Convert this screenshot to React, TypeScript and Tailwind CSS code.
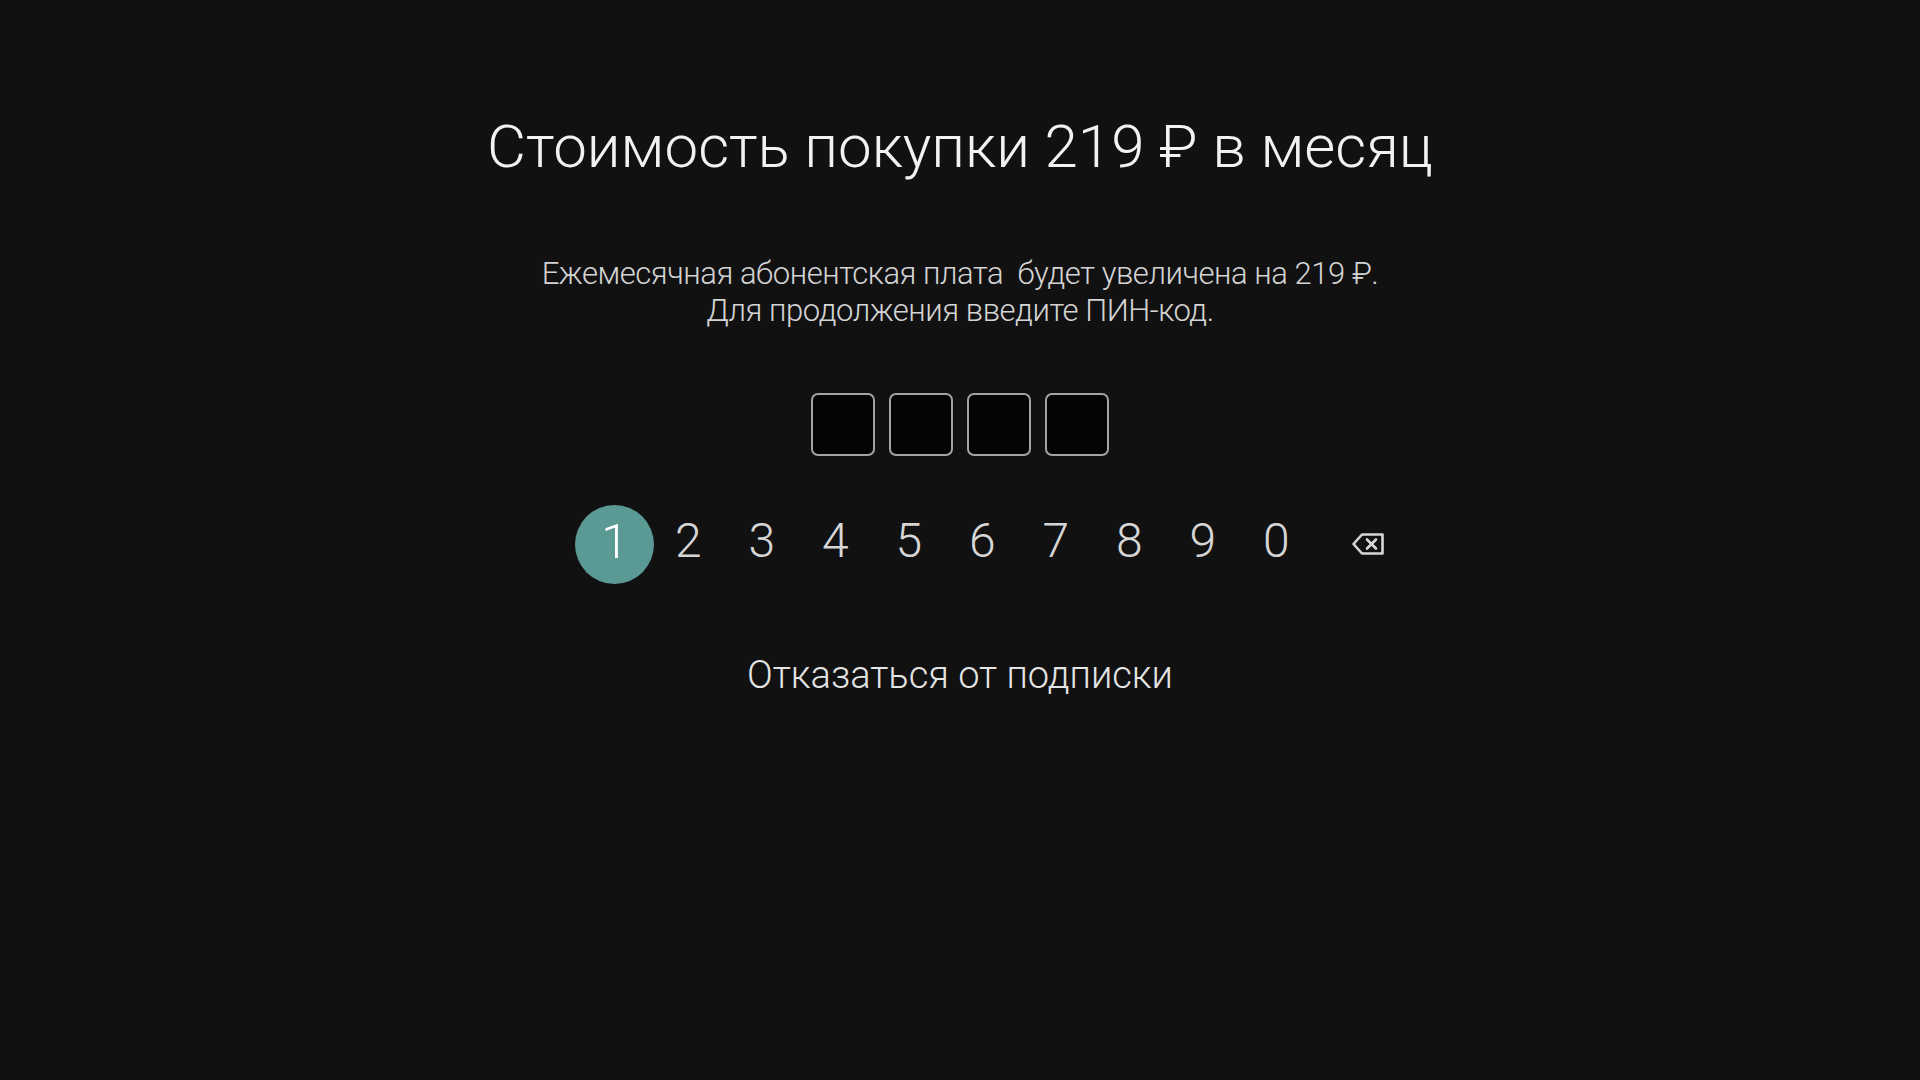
const DIGITS = ["1", "2", "3", "4", "5", "6", "7", "8", "9", "0"];

function BackspaceIcon() {
  return (
    <svg width="34" height="24" viewBox="0 0 34 24" fill="none">
      <path
        d="M11 2.5H31.5V21.5H11L2.5 12L11 2.5Z"
        stroke="#d8d8d8"
        strokeWidth="2.6"
        strokeLinejoin="round"
      />
      <path d="M16 7.5L25 16.5M25 7.5L16 16.5" stroke="#d8d8d8" strokeWidth="2.6" strokeLinecap="round" />
    </svg>
  );
}

export default function App() {
  const active = 0;

  return (
    <div
      className="w-full h-[1080px] bg-[#111111] flex flex-col items-center overflow-hidden"
      style={{ fontFamily: "Roboto, 'Noto Sans', sans-serif" }}
    >
      {/* Title */}
      <h1 className="mt-[117px] text-[60px] leading-none font-light text-[#f2f2f2]">
        Стоимость покупки 219 ₽ в месяц
      </h1>

      {/* Description */}
      <div className="mt-[78px] text-center text-[31px] leading-[37px] font-light text-[#d4d4d4] tracking-[-0.45px]">
        <p>Ежемесячная абонентская плата&nbsp; будет увеличена на 219 ₽.</p>
        <p>Для продолжения введите ПИН-код.</p>
      </div>

      {/* PIN boxes */}
      <div className="mt-[64px] flex gap-[14px]">
        {[0, 1, 2, 3].map((i) => (
          <div
            key={i}
            className="w-[64px] h-[63px] rounded-[7px] border-2 border-[#a3a3a3] bg-[#050305]"
          />
        ))}
      </div>

      {/* Keypad */}
      <div className="mt-[49px] flex items-center pl-[43px]">
        {DIGITS.map((d, i) => (
          <div key={d} className="w-[73.5px] h-[79px] flex items-center justify-center">
            {i === active ? (
              <div className="w-[79px] h-[79px] shrink-0 rounded-full bg-[#5b9995] flex items-center justify-center text-[49px] font-light text-white leading-none">
                <span className="mb-[6px]">{d}</span>
              </div>
            ) : (
              <span className="mb-[8px] text-[48px] font-light text-[#d6d6d6] leading-none">{d}</span>
            )}
          </div>
        ))}
        <div className="ml-[38px] mb-[2px] flex items-center">
          <BackspaceIcon />
        </div>
      </div>

      {/* Cancel */}
      <button className="mt-[72px] text-[38px] leading-none text-[#e4e4e4] font-light">
        Отказаться от подписки
      </button>
    </div>
  );
}
